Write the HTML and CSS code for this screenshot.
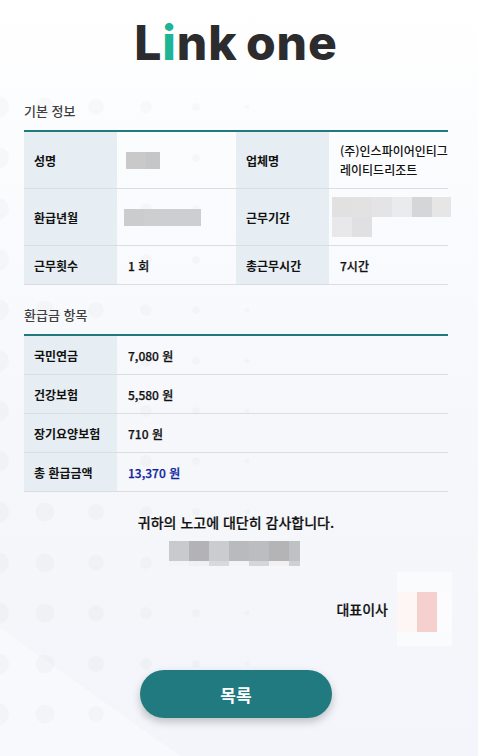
FILE: index.html
```html
<!DOCTYPE html>
<html lang="ko">
<head>
<meta charset="utf-8">
<title>Link one</title>
<link rel="stylesheet" href="styles.css">
</head>
<body>
<div class="page">
  <div class="wedge"></div>
  <svg class="dots" width="478" height="756" viewBox="0 0 478 756" aria-hidden="true">
    <defs>
      <g id="r">
        <circle cx="-2" cy="0" r="11"/><circle cx="45" cy="0" r="9.5"/><circle cx="96" cy="0" r="8"/><circle cx="146" cy="0" r="6"/><circle cx="196" cy="0" r="4"/><circle cx="247" cy="0" r="2.5"/>
      </g>
    </defs>
    <use href="#r" y="107"/><use href="#r" y="158"/><use href="#r" y="209"/><use href="#r" y="260"/>
    <use href="#r" y="310"/><use href="#r" y="361"/><use href="#r" y="411"/><use href="#r" y="461"/>
    <use href="#r" y="512"/><use href="#r" y="563"/><use href="#r" y="613"/><use href="#r" y="664"/><use href="#r" y="714"/>
  </svg>
  <div class="content">
    <header class="logo">L<span class="logo-i">i</span>nk one</header>

    <h2 class="title">기본 정보</h2>
    <table class="info">
      <colgroup><col class="c-th"><col class="c-td"><col class="c-th"><col class="c-td"></colgroup>
      <tr class="tall">
        <th>성명</th>
        <td><div class="mosaic m-name"><span></span><span></span></div></td>
        <th>업체명</th>
        <td class="company">(주)인스파이어인티그레이티드리조트</td>
      </tr>
      <tr class="tall">
        <th>환급년월</th>
        <td><div class="mosaic m-year"><span></span><span></span><span></span><span></span></div></td>
        <th>근무기간</th>
        <td><div class="mosaic m-period"><span></span><span></span><span></span><span></span><span></span><span></span><span></span><span></span></div></td>
      </tr>
      <tr>
        <th>근무횟수</th>
        <td>1 회</td>
        <th>총근무시간</th>
        <td>7시간</td>
      </tr>
    </table>

    <h2 class="title title-second">환급금 항목</h2>
    <table class="info">
      <colgroup><col class="c-th"><col class="c-td"><col class="c-th"><col class="c-td"></colgroup>
      <tr><th>국민연금</th><td colspan="3">7,080 원</td></tr>
      <tr><th>건강보험</th><td colspan="3">5,580 원</td></tr>
      <tr><th>장기요양보험</th><td colspan="3">710 원</td></tr>
      <tr><th>총 환급금액</th><td colspan="3" class="total">13,370 원</td></tr>
    </table>

    <p class="thanks">귀하의 노고에 대단히 감사합니다.</p>
    <div class="mosaic m-org"><span></span><span></span><span></span><span></span><span></span><span></span><span></span><span></span><span></span><span></span><span></span><span></span><span></span><span></span></div>

    <div class="sign">
      <span class="ceo">대표이사</span>
      <div class="mosaic m-stamp"><span></span><span></span><span></span><span></span><span></span><span></span><span></span><span></span><span></span></div>
    </div>

    <button class="btn" type="button">목록</button>
  </div>
</div>
</body>
</html>
```

FILE: styles.css
```css
* { box-sizing: border-box; }
html, body { margin: 0; padding: 0; }
body {
  font-family: "Noto Sans CJK KR", "Noto Sans", sans-serif;
  color: #111;
}
.page {
  position: relative;
  width: 478px;
  height: 756px;
  overflow: hidden;
  background: linear-gradient(180deg, #ffffff 0, #fbfcfe 20%, #f6f7fb 60%, #f3f5fa 100%);
}
.wedge {
  position: absolute;
  inset: 0;
  background: linear-gradient(180deg, #f9fafd 0, #f7f9fd 100%);
  clip-path: polygon(0 628px, 180px 756px, 0 756px);
}
.dots {
  position: absolute;
  left: 0;
  top: 0;
  fill: rgba(0, 0, 0, 0.02);
}
.content {
  position: relative;
  padding: 0 30px 0 24px;
}
.logo {
  height: 70px;
  padding-top: 9px;
  text-align: center;
  font-family: Inter, sans-serif;
  font-size: 48px;
  line-height: 68px;
  font-weight: 800;
  letter-spacing: 0.9px;
  word-spacing: -3px;
  color: #2c2c2e;
}
.logo-i { color: #1db595; }
.title {
  margin: 0;
  padding-top: 31px;
  height: 60px;
  font-size: 13px;
  line-height: 20px;
  font-weight: 500;
  color: #3f3f3f;
}
.title-second { padding-top: 20px; height: 49px; }
.info {
  width: 424px;
  table-layout: fixed;
  border-collapse: separate;
  border-spacing: 0;
  border-top: 2px solid #217a80;
  font-size: 12px;
  line-height: 19px;
}
.c-th { width: 93px; }
.c-td { width: 119px; }
.info th, .info td {
  height: 39px;
  padding: 0 0 0 11px;
  border-bottom: 1px solid #dcdde0;
  font-weight: 500;
  text-align: left;
  vertical-align: middle;
  -webkit-text-stroke: 0.25px currentColor;
}
.info th {
  padding-left: 10px;
  background: #e7eef3;
  font-weight: 700;
  -webkit-text-stroke: 0;
}
.info .tall th, .info .tall td { height: 57px; }
.info .company { word-break: break-all; -webkit-text-stroke: 0; }
.info .total { color: #101f9a; }
.mosaic { display: grid; }
.mosaic span { display: block; }
.m-name {
  grid-template-columns: 20px 14px;
  grid-template-rows: 17px;
  margin-left: -2px;
}
.m-name span:nth-child(1) { background: #c9c9ca; }
.m-name span:nth-child(2) { background: #c4c6c8; }
.m-year {
  grid-template-columns: 20px 20px 20px 17px;
  grid-template-rows: 17px;
  margin-left: -4px;
}
.m-year span:nth-child(1) { background: #cbccce; }
.m-year span:nth-child(2) { background: #cdced0; }
.m-year span:nth-child(3) { background: #ccced1; }
.m-year span:nth-child(4) { background: #cdced1; }
.m-period {
  grid-template-columns: repeat(5, 20px) 19px;
  grid-template-rows: 20px 20px;
  width: 119px;
  margin-left: -8px;
}
.m-period span:nth-child(1) { background: #e1e1e2; }
.m-period span:nth-child(2) { background: #e2e2e3; }
.m-period span:nth-child(3) { background: #e4e4e6; }
.m-period span:nth-child(4) { background: #eaebec; }
.m-period span:nth-child(5) { background: #d5d6d8; }
.m-period span:nth-child(6) { background: #e6e6e7; }
.m-period span:nth-child(7) { background: #e8e8ea; }
.m-period span:nth-child(8) { background: #e0e0e2; }
.thanks {
  margin: 20px 0 0;
  text-align: center;
  font-size: 14px;
  line-height: 20px;
  font-weight: 500;
  -webkit-text-stroke: 0.2px currentColor;
}
.m-org {
  grid-template-columns: repeat(6, 20px) 11px;
  grid-template-rows: 20px 5px;
  width: 131px;
  margin: 9px 0 0 145px;
}
.m-org span:nth-child(1) { background: #c9cacd; }
.m-org span:nth-child(2) { background: #b3b2b6; }
.m-org span:nth-child(3) { background: #cbccd0; }
.m-org span:nth-child(4) { background: #b9babd; }
.m-org span:nth-child(5) { background: #bcbdc0; }
.m-org span:nth-child(6) { background: #b4b4b7; }
.m-org span:nth-child(7) { background: #bfc2c4; }
.m-org span:nth-child(8) { background: #f3f4f7; }
.m-org span:nth-child(9) { background: #eff0f3; }
.m-org span:nth-child(10) { background: #d6d9dd; }
.m-org span:nth-child(11) { background: #f3f4f7; }
.m-org span:nth-child(12) { background: #d4d6d9; }
.m-org span:nth-child(13) { background: #f4eff1; }
.m-org span:nth-child(14) { background: #ced1d3; }
.sign {
  display: flex;
  justify-content: flex-end;
  align-items: center;
  gap: 9px;
  margin: 6px -4px 0 0;
}
.ceo {
  font-size: 14px;
  line-height: 20px;
  font-weight: 500;
  -webkit-text-stroke: 0.2px currentColor;
}
.m-stamp {
  grid-template-columns: 20px 20px 15px;
  grid-template-rows: 20px 40px 14px;
  width: 55px;
}
.m-stamp span:nth-child(1),
.m-stamp span:nth-child(2),
.m-stamp span:nth-child(3),
.m-stamp span:nth-child(7),
.m-stamp span:nth-child(8),
.m-stamp span:nth-child(9) { background: #fafbfd; }
.m-stamp span:nth-child(4) { background: #fdf6f5; }
.m-stamp span:nth-child(5) { background: #f6d0ce; }
.m-stamp span:nth-child(6) { background: #fcfcfe; }
.btn {
  display: block;
  width: 192px;
  height: 48px;
  margin: 24px 0 0 116px;
  border: 0;
  border-radius: 24px;
  background: #217a80;
  box-shadow: 0 4px 8px rgba(0, 0, 0, 0.22);
  color: #fff;
  font-family: inherit;
  font-size: 17px;
  font-weight: 700;
  padding: 0;
}
```
